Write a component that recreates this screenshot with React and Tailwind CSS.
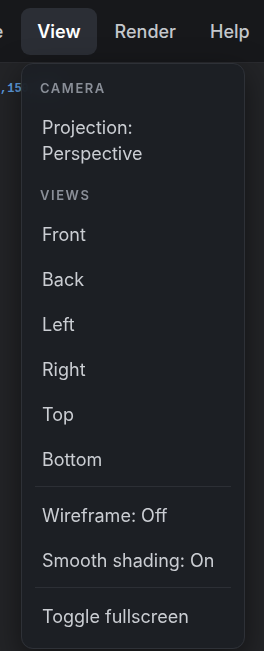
import React from 'react';

const MenuHeader = ({ children, first }) => (
  <div className={`px-[13px] ${first ? 'pt-[11px]' : 'pt-3'} pb-2 text-[13px] leading-4 font-semibold tracking-[0.12em] uppercase text-[#8a8f98]`}>
    {children}
  </div>
);

const MenuItem = ({ children }) => (
  <div className="px-[15px] pt-[11px] pb-[8px] rounded-md text-[18px] leading-[26px] text-[#cbced3] cursor-default">
    {children}
  </div>
);

const Separator = () => <div className="mx-2 my-[5px] h-px bg-[#2c2f35]" />;

const App = () => {
  return (
    <div className="relative w-[264px] h-[651px] overflow-hidden bg-[#232427]" style={{ fontFamily: 'Inter, "Noto Sans", sans-serif' }}>
      <div className="h-[63px] bg-[#17181b] border-b border-[#2a2b2f] flex items-center gap-0.5 -ml-[43px]">
        <div className="px-4 py-3 text-[18px] font-medium text-[#c4c7cc]">File</div>
        <div className="px-4 h-[47px] flex items-center rounded-[9px] bg-[#2b2e35] text-[18px] font-semibold text-white">View</div>
        <div className="px-4 py-3 text-[18px] font-medium text-[#c4c7cc]">Render</div>
        <div className="px-4 py-3 text-[18px] font-medium text-[#c4c7cc]">Help</div>
      </div>

      <div className="pt-[18px] whitespace-nowrap font-mono font-bold text-[12px] leading-4 text-[#5f9fe0]">
        ,150,255
      </div>

      <div className="absolute left-[21px] top-[63px] w-[224px] rounded-[12px] border border-[#2e3137] bg-[#1c1f25]/90 backdrop-blur-sm shadow-[0_10px_30px_rgba(0,0,0,0.5)] px-[5px] pt-[5px] pb-[10px]">
        <MenuHeader first>Camera</MenuHeader>
        <MenuItem>
          Projection:
          <br />
          Perspective
        </MenuItem>
        <MenuHeader>Views</MenuHeader>
        <MenuItem>Front</MenuItem>
        <MenuItem>Back</MenuItem>
        <MenuItem>Left</MenuItem>
        <MenuItem>Right</MenuItem>
        <MenuItem>Top</MenuItem>
        <MenuItem>Bottom</MenuItem>
        <Separator />
        <MenuItem>Wireframe: Off</MenuItem>
        <MenuItem>Smooth shading: On</MenuItem>
        <Separator />
        <MenuItem>Toggle fullscreen</MenuItem>
      </div>
    </div>
  );
};

export default App;
